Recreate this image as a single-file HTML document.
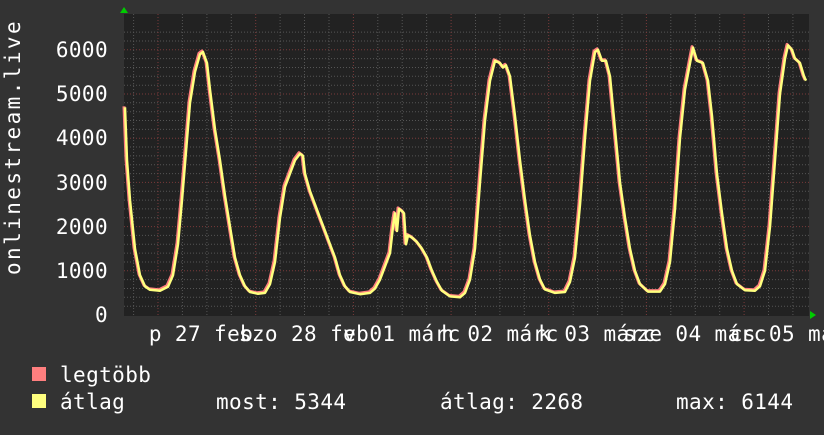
<!DOCTYPE html>
<html><head><meta charset="utf-8"><style>
body{margin:0;background:#333;width:824px;height:430px;overflow:hidden}
text{font-family:"DejaVu Sans Mono","Liberation Mono",monospace;fill:#fff;font-size:21px;letter-spacing:0.4px}
</style></head><body>
<svg id="s" width="824" height="430" xmlns="http://www.w3.org/2000/svg">
<rect width="824" height="430" fill="#333"/>
<rect x="124" y="14" width="685" height="302" fill="#222"/>
<g id="grid"></g>
<polyline id="pk" fill="none" stroke="#ff7f7f" stroke-width="3" stroke-linejoin="round" transform="translate(-1,-1)"/>
<polyline id="yl" fill="none" stroke="#ffff7f" stroke-width="2.5" stroke-linejoin="round"/>
<polygon points="120,13 128,13 124,7" fill="#0c0"/>
<polygon points="810,311 810,319 816,315" fill="#0c0"/>
<g text-anchor="end">
<text x="108" y="57">6000</text><text x="108" y="101">5000</text><text x="108" y="145">4000</text>
<text x="108" y="190">3000</text><text x="108" y="234">2000</text><text x="108" y="278">1000</text><text x="108" y="322">0</text>
</g>
<text transform="translate(20,148) rotate(-90)" text-anchor="middle" textLength="254" lengthAdjust="spacing">onlinestream.live</text>
<g text-anchor="middle">
<text x="201" y="341">p 27 feb</text><text x="304" y="341">szo 28 feb</text><text x="402" y="341">v 01 márc</text>
<text x="500" y="341">h 02 márc</text><text x="597" y="341">k 03 márc</text><text x="695" y="341">sze 04 márc</text><text x="795" y="341">cs 05 márc</text>
</g>
<rect x="32" y="367" width="14" height="14" fill="#ff7f7f"/>
<rect x="32" y="394" width="14" height="14" fill="#ffff7f"/>
<text x="60" y="382">legtöbb</text>
<text x="60" y="409">átlag</text>
<text x="216" y="409">most: 5344</text>
<text x="440" y="409">átlag: 2268</text>
<text x="676" y="409">max: 6144</text>
</svg>
<script>
var g=document.getElementById('grid'),h='';
function Y(v){return 315-v*0.0442}
for(var v=200;v<=6400;v+=200){var y=Y(v).toFixed(1);var maj=v%1000==0;
h+='<line x1="124" x2="809" y1="'+y+'" y2="'+y+'" stroke="'+(maj?'#7a3a3a':'#555')+'" stroke-dasharray="1,2"/>';}
for(var x=133.6;x<809;x+=24.42){var d=Math.abs(((x-158)/97.7)-Math.round((x-158)/97.7))<0.05;
h+='<line y1="14" y2="316" x1="'+x.toFixed(1)+'" x2="'+x.toFixed(1)+'" stroke="'+(d?'#7a3a3a':'#555')+'" stroke-dasharray="1,2"/>';}
g.innerHTML=h;
var p=[125,4700,127,3500,130,2600,135,1500,140,900,145,650,150,570,160,550,168,640,173,900,178,1600,182,2600,186,3700,190,4800,195,5500,200,5900,203,5950,207,5700,210,5100,215,4200,220,3500,225,2700,230,2000,235,1300,240,900,245,650,250,520,258,480,265,500,270,700,275,1200,280,2200,285,2900,290,3200,295,3500,300,3650,303,3600,305,3200,310,2800,315,2500,320,2200,325,1900,330,1600,335,1300,340,900,345,650,350,520,360,470,370,500,375,600,380,800,385,1100,390,1400,393,2000,395,2300,397,1900,399,2400,402,2350,404,2300,406,1600,408,1800,412,1750,417,1650,422,1500,427,1300,432,1000,437,750,442,550,450,420,460,400,465,500,470,800,475,1500,480,3000,485,4400,490,5300,495,5750,500,5700,503,5600,506,5650,510,5400,515,4500,520,3500,525,2600,530,1800,535,1200,540,800,545,580,555,500,565,520,570,750,575,1300,580,2500,585,4000,590,5300,595,5950,598,6000,602,5750,606,5750,610,5400,615,4200,620,3000,625,2200,630,1500,635,1000,640,700,648,530,660,530,665,700,670,1200,675,2400,680,4000,685,5100,690,5700,693,6050,697,5750,703,5700,708,5300,712,4500,717,3200,722,2300,727,1500,732,1000,737,700,745,560,755,550,760,650,765,1000,770,2000,775,3500,780,5000,785,5800,788,6100,792,6000,795,5800,800,5700,804,5400,806,5300];
var s='';for(var i=0;i<p.length;i+=2)s+=p[i]+','+Y(p[i+1]).toFixed(1)+' ';
document.getElementById('pk').setAttribute('points',s);
document.getElementById('yl').setAttribute('points',s);
</script>
</body></html>
